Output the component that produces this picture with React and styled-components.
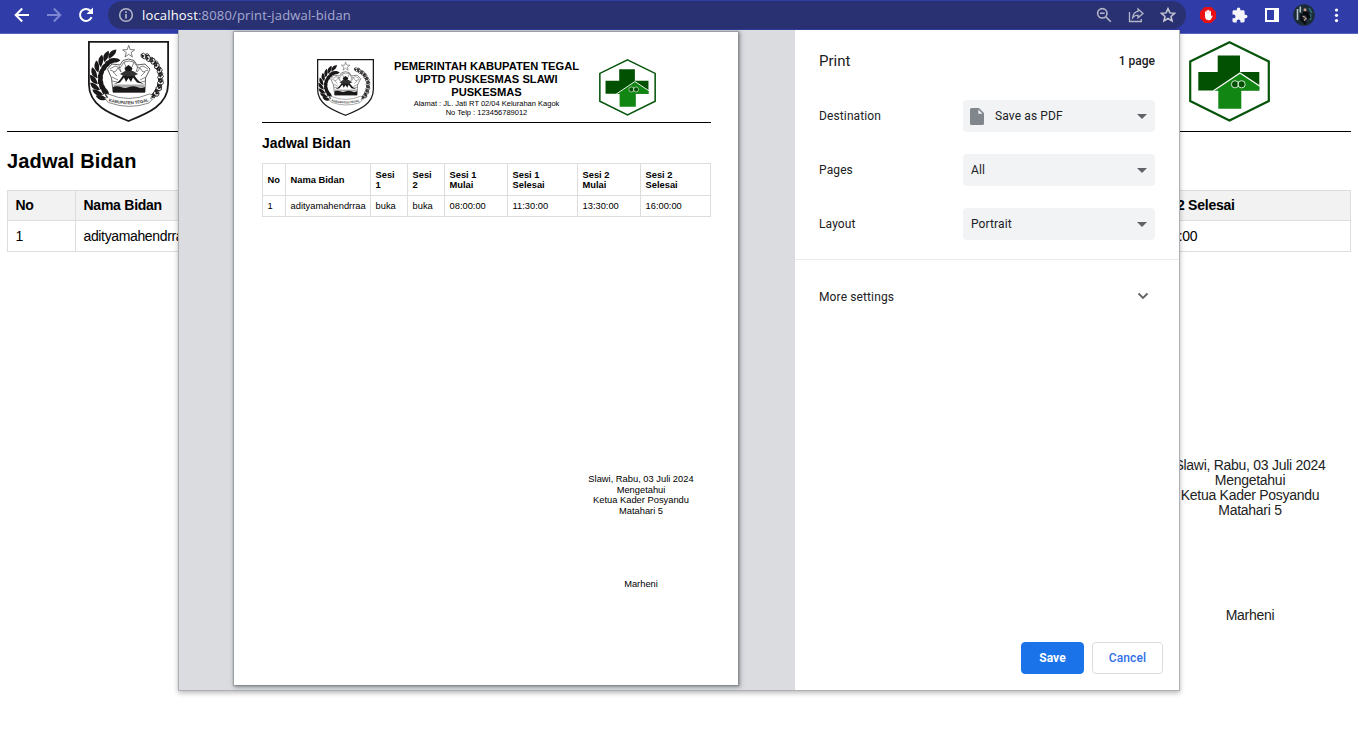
import React from "react";
import styled, { createGlobalStyle } from "styled-components";

const GlobalStyle = createGlobalStyle`
  * { box-sizing: border-box; }
  html, body { margin: 0; height: 100%; overflow: hidden; background: #fff; }
  body { font-family: "Liberation Sans", Arial, sans-serif; color: #000; }
`;

const Screen = styled.div`
  position: relative;
  width: 1358px;
  height: 731px;
  overflow: hidden;
  display: flex;
  flex-direction: column;
`;

/* ---------- browser bar ---------- */

const BrowserBar = styled.header`
  flex: none;
  display: flex;
  align-items: flex-start;
  height: 34px;
  background: #303da8;
  border-bottom: 1px solid #5a65bd;
`;

const NavGroup = styled.div`
  display: flex;
  width: 108px;
  height: 30px;
  align-items: center;
  padding-left: 12px;
  gap: 12px;
`;

const AddressBar = styled.div`
  display: flex;
  align-items: center;
  width: 1078px;
  height: 28px;
  margin-top: 1px;
  padding: 0 8px 0 8px;
  border-radius: 14px;
  background: #2a3172;
`;

const Url = styled.div`
  flex: 1;
  margin-left: 6px;
  font: 13px/20px "Open Sans", "Noto Sans", sans-serif;
  letter-spacing: 0.17px;
  color: #a5aad0;
`;

const Host = styled.span`
  color: #fff;
`;

const AddressActions = styled.div`
  display: flex;
  gap: 12px;
`;

const Extensions = styled.div`
  display: flex;
  align-items: center;
  height: 30px;
  padding-left: 12px;
  gap: 12px;
`;

const BarIcon = styled.svg`
  display: block;
  flex: none;
  width: 20px;
  height: 20px;
  overflow: visible;
  fill: none;
  stroke: ${(p) => p.$tone || "#fff"};
  stroke-width: ${(p) => p.$weight || 2};
`;

/* ---------- printed document ---------- */

const DocumentPage = styled.main`
  padding: 7px 7px 0;
`;

const Letterhead = styled.div`
  display: flex;
  justify-content: space-between;
  height: 91px;
  padding: 0 81px;
  border-bottom: 1px solid #000;
`;

const Emblem = styled.svg`
  display: block;
  width: ${(p) => p.$size}px;
  height: ${(p) => p.$size}px;
`;

const PageTitle = styled.h1`
  margin: 17px 0 0;
  font-size: 20px;
  line-height: 24px;
  letter-spacing: 0.14px;
`;

const WideTable = styled.table`
  width: 1343px;
  margin-top: 17px;
  table-layout: fixed;
  border-collapse: collapse;
  font-size: 14px;
  letter-spacing: -0.25px;
  line-height: 15px;
  th, td {
    padding: 0 7.5px;
    border: 1px solid #ddd;
    text-align: left;
    white-space: nowrap;
  }
  th { height: 30px; background: #f2f2f2; }
  td { height: 31px; letter-spacing: -0.36px; }
`;

const WideSignature = styled.div`
  display: flex;
  flex-direction: column;
  align-items: center;
  width: 154px;
  margin: 206px 24px 0 auto;
  font-size: 14px;
  letter-spacing: -0.27px;
  line-height: 15px;
  color: #222;
  white-space: nowrap;
`;

const Signer = styled.div`
  margin-top: ${(p) => p.$gap}px;
`;

/* ---------- print dialog ---------- */

const Dialog = styled.div`
  position: absolute;
  left: 178px;
  top: 30px;
  width: 1002px;
  height: 661px;
  display: flex;
  border: solid #aeb0b3;
  border-width: 0 1px 1px 1px;
  background: #fff;
  box-shadow: 0 2px 5px rgba(0, 0, 0, 0.28);
`;

const PreviewArea = styled.section`
  width: 616px;
  background: #dadce0;
  padding: 2px 0 0 55px;
`;

const Paper = styled.article`
  width: 504px;
  height: 653px;
  padding: 27px 27px 0 28px;
  background: #fff;
  box-shadow: 0 0 1px 1px rgba(110, 112, 116, 0.35), 1px 1px 4px 1px rgba(60, 64, 67, 0.55);
`;

const PaperHead = styled.div`
  display: flex;
  justify-content: space-between;
  width: 449px;
  height: 64px;
  padding: 0 55px;
  border-bottom: 1px solid #000;
`;

const Agency = styled.div`
  display: flex;
  flex-direction: column;
  align-items: center;
  padding-top: 1px;
  white-space: nowrap;
`;

const AgencyName = styled.div`
  font-size: 11.15px;
  line-height: 13px;
  font-weight: 700;
`;

const AgencyContact = styled.div`
  font-size: 7.5px;
  line-height: 9px;
`;

const PaperTitle = styled.h2`
  margin: 12px 0 0;
  font-size: 13.9px;
  line-height: 17px;
`;

const PaperTable = styled.table`
  width: 448px;
  margin-top: 11px;
  table-layout: fixed;
  border-collapse: collapse;
  font-size: 9.33px;
  line-height: 10px;
  th, td {
    padding: 0 4.5px;
    border: 1px solid #ddd;
    text-align: left;
  }
  td { white-space: nowrap; height: 21px; }
  th { height: 32px; }
`;

const HeadingLine = styled.div`
  white-space: nowrap;
`;

const PaperSignature = styled.div`
  display: flex;
  flex-direction: column;
  align-items: center;
  width: 106px;
  margin: 257px 17px 0 auto;
  font-size: 9.33px;
  line-height: 10.6px;
  white-space: nowrap;
`;

const Settings = styled.section`
  flex: 1;
  display: flex;
  flex-direction: column;
  font: 12px/20px Roboto, sans-serif;
  letter-spacing: 0.12px;
  color: #202124;
`;

const SettingsHead = styled.div`
  display: flex;
  justify-content: space-between;
  align-items: center;
  height: 59px;
  padding: 3px 24px 0;
`;

const SettingsTitle = styled.div`
  font-size: 15px;
  letter-spacing: 0;
`;

const PageCount = styled.div`
  font-weight: 500;
  letter-spacing: 0.02px;
`;

const SettingRow = styled.div`
  display: flex;
  align-items: center;
  justify-content: space-between;
  height: 54px;
  padding: 0 24px;
`;

const Select = styled.div`
  display: flex;
  align-items: center;
  width: 192px;
  height: 32px;
  padding: 0 8px;
  border-radius: 4px;
  background: #f1f3f4;
`;

const SelectValue = styled.span`
  flex: 1;
`;

const FileIcon = styled.svg`
  width: 14px;
  height: 17px;
  margin: 0 11px 0 -1px;
`;

const Caret = styled.i`
  border: solid transparent;
  border-width: 5px 5px 0;
  border-top-color: #5f6368;
`;

const MoreRow = styled(SettingRow)`
  height: 74px;
  margin-top: 8px;
  border-top: 1px solid #e8eaed;
`;

const Chevron = styled.svg`
  width: 24px;
  height: 24px;
  margin-top: -2px;
  fill: none;
  stroke: #5f6368;
  stroke-width: 1.8;
`;

const DialogActions = styled.div`
  display: flex;
  justify-content: flex-end;
  gap: 8px;
  margin-top: auto;
  padding: 0 16px 16px;
`;

const Button = styled.button`
  width: ${(p) => p.$width}px;
  height: 32px;
  padding: 0;
  border: 1px solid ${(p) => (p.$primary ? "#1a73e8" : "#dadce0")};
  border-radius: 4px;
  background: ${(p) => (p.$primary ? "#1a73e8" : "#fff")};
  color: ${(p) => (p.$primary ? "#fff" : "#2f6fe6")};
  font: ${(p) => (p.$primary ? 700 : 500)} 12px Roboto, sans-serif;
  letter-spacing: 0.1px;
`;

/* ---------- drawings ---------- */

const leftLeaves = [
  [25, 16, 70], [20, 18, 50], [15.5, 22, 35], [12, 27, 20], [9.5, 32.5, 5],
  [9, 38.5, -10], [10, 44.5, -25], [12.5, 50, -35], [16, 54.5, -45],
];
const rightFlowers = [
  [57, 15], [61.5, 18], [66, 21], [69.5, 26], [72, 31], [72.5, 37], [72, 43], [70, 48.5], [67, 53.5],
];

function RegencyCrest({ size, id }) {
  return (
    <Emblem $size={size} viewBox="0 0 81 81">
      <path
        d="M.9.9H80.1V43C80.1 65 58 73 40.5 80 23 73 .9 65 .9 43Z"
        fill="#fff" stroke="#1b1819" strokeWidth="1.8"
      />
      <path d="M40.7 4.4l1.500 4.300 4.500.1-3.600 2.800 1.300 4.300-3.700-2.500-3.700 2.500 1.300-4.300-3.600-2.800 4.500-.1Z" fill="#fff" stroke="#444" strokeWidth=".7" />
      {leftLeaves.map(([x, y, r]) => (
        <g key={y} transform={`translate(${x} ${y}) rotate(${r}) scale(1.2)`} fill="#1b1819">
          <path d="M0 4C-5.500 2.500-5.800-1.500-5-4.800-1.800-3.500-.3-.5 0 4Z" />
          <path d="M.3 4C5.500 2.500 5.800-1.500 4.800-4.800 1.900-3.500.5-.5.3 4Z" />
        </g>
      ))}
      {rightFlowers.map(([x, y], i) => (
        <g key={y} transform={`translate(${x} ${y}) rotate(${i * 18 + 10})`}>
          <path d="M-4-1Q-2-4 0-1.500 2.500-4.200 4-1 3.800 1.800 1 2 0 3.800-2 2.300-4.500 2-4-1Z" fill="#fff" stroke="#1b1819" strokeWidth=".8" />
          <path d="M0-1.500L4-1Q3.800 1.800 1 2ZM-4-1L-2 2.300-.8 0Z" fill="#1b1819" stroke="#1b1819" strokeWidth=".5" />
        </g>
      ))}
      <path d="M19.500 28L24 23l8 1 3-4.500 5.500-1.500 5.500 1.500 3 4.500 8-1 5 5-4.500 9L57 51H25l-1.500-14Z" fill="#fff" stroke="#333" strokeWidth=".8" />
      <path d="M22 28l5-3 5 2 4-6 5-1 5 1 4 6 5-2 5 3M22 29l5 2 3-4 3 4M60 29l-5 2-3-4-3 4M25 31l4 4M57 31l-4 4M24 36l6 3M58 36l-6 3M24 40l5 1M58 40l-5 1M31 25l2 6M50 25l-2 6M36 21l2 5M46 21l-2 5" fill="none" stroke="#666" strokeWidth=".8" />
      <path d="M26 43C33 40 34 35 37.500 30l-1-3 4-3 4 3-1 3C47 35 49 40 56 43l-7-1.500-4-5-2 4.500-2.500-4-2.500 4-2-4.500-4 5Z" fill="#1b1819" />
      <path d="M32 33l5-3h8l5 3-4 2h-10Z" fill="#333" />
      <path d="M25.500 43.500h31v2.500h-31Z" fill="#aaa" />
      <path d="M25 46q4-1.500 8 0t8 0 8 0 8 0V51.500H25Z" fill="#1b1819" />
      <path d="M20 53Q41 62 61.500 53l3 1-2 3.500 2 .5-3.500 4Q41 69 20.500 61.500L16.500 57l3.500-.5L17.500 53Z" fill="#fff" stroke="#555" strokeWidth=".7" />
      <path id={id} d="M20.500 60.200Q41 66.500 62 59.700" fill="none" />
      <text fontSize="4.300" fontWeight="700" fill="#333" fontFamily="Liberation Sans, sans-serif">
        <textPath href={`#${id}`} textLength="41">KABUPATEN TEGAL</textPath>
      </text>
    </Emblem>
  );
}

function HealthEmblem({ size }) {
  return (
    <Emblem $size={size} viewBox="0 0 81 81">
      <path d="M40.500 1.300L79.800 20.500V60L40.500 79.400 1.200 60V20.500Z" fill="#fff" stroke="#06550b" strokeWidth="2.200" />
      <path d="M28.700 14.500H51V31H70.300V49.500H9.300V31H28.700Z" fill="#025002" />
      <path d="M51 32L70.300 44.700V49.500H52.300V67.700H29.300V49.500H25Z" fill="#118612" />
      <path d="M24.500 49.800L51 32 71 45.200" fill="none" stroke="#fff" strokeWidth="1.300" />
      <g fill="#025002" stroke="#e4f3e4" strokeWidth=".9">
        <circle cx="46" cy="43.300" r="3.600" />
        <circle cx="52.600" cy="43.300" r="3.600" />
      </g>
      <path d="M49.300 40.600v5.400" stroke="#e4f3e4" strokeWidth=".8" />
    </Emblem>
  );
}

function Browser() {
  return (
    <BrowserBar>
      <NavGroup>
        <BarIcon viewBox="0 0 20 20"><path d="M17 10H4M10.200 3.500L3.700 10l6.500 6.500" /></BarIcon>
        <BarIcon viewBox="0 0 20 20" $tone="#7d86d2"><path d="M3 10h13M9.800 3.500l6.500 6.500-6.500 6.500" /></BarIcon>
        <BarIcon viewBox="0 0 20 20">
          <path d="M15.600 12.200A6 6 0 1 1 14.400 5.800" />
          <path d="M17 2.500V9h-6.500Z" fill="#fff" stroke="none" />
        </BarIcon>
      </NavGroup>
      <AddressBar>
        <BarIcon viewBox="0 0 20 20" $tone="#b5b7c8" $weight={1.5}>
          <circle cx="10" cy="10" r="6.300" />
          <path d="M10 9v4.500M10 6.300v1.600" strokeWidth="1.700" />
        </BarIcon>
        <Url><Host>localhost</Host>:8080/print-jadwal-bidan</Url>
        <AddressActions>
          <BarIcon viewBox="0 0 20 20" $tone="#b5b7c8" $weight={1.6}>
            <circle cx="8.300" cy="8.300" r="4.700" /><path d="M11.800 11.800l5 5M6 8.300h4.600" />
          </BarIcon>
          <BarIcon viewBox="0 0 20 20" $tone="#b5b7c8" $weight={1.3}>
            <path d="M3.500 7v9.500h11.800v-2.500" />
            <path d="M12 4l5 4.500-5 4.300v-2.600c-2.500 0-4 .7-5.300 2.400.4-3.300 2-5.800 5.300-6.200Z" />
          </BarIcon>
          <BarIcon viewBox="0 0 20 20" $tone="#c8cad6" $weight={1.5}>
            <path d="M10 3.600l1.900 4.300 4.700.4-3.600 3.100 1.100 4.600-4.100-2.500L5.900 16 7 11.400 3.400 8.300l4.700-.4Z" />
          </BarIcon>
        </AddressActions>
      </AddressBar>
      <Extensions>
        <BarIcon viewBox="0 0 20 20">
          <path d="M6.700 2h6.600L18 6.700v6.600L13.300 18H6.700L2 13.300V6.700Z" fill="#e90f13" stroke="none" />
          <path d="M7.700 10V7M9.200 9.500V5.700M10.800 9.500V5.500M12.300 10V6.700" strokeWidth="1.400" strokeLinecap="round" />
          <path d="M7 9h6v2.500l.8-.9c.6-.3 1 .1.700.8l-1.600 2.800c-1 1.300-4 1.400-5.100-.2-.6-1-.8-2.500-.8-5Z" fill="#fff" stroke="none" />
        </BarIcon>
        <BarIcon viewBox="-1.500 -2.500 28 28">
          <path d="M20.500 11H19V7c0-1.100-.9-2-2-2h-4V3.500a2.500 2.500 0 0 0-5 0V5H4c-1.100 0-2 .9-2 2v3.800h1.500a2.700 2.700 0 0 1 0 5.400H2V20c0 1.100.9 2 2 2h3.800v-1.500a2.700 2.700 0 0 1 5.400 0V22H17c1.100 0 2-.9 2-2v-4h1.500a2.500 2.500 0 0 0 0-5z" fill="#f4f4fa" stroke="none" />
        </BarIcon>
        <BarIcon viewBox="0 0 20 20">
          <path d="M4 4h12v12H4Z" /><path d="M12 4h4v12h-4Z" fill="#fff" stroke="none" />
        </BarIcon>
        <BarIcon viewBox="0 0 20 20">
          <circle cx="10" cy="10" r="10.800" fill="#1c2c36" stroke="none" />
          <path d="M3.500 4v11M6.300 1.500v6" stroke="#b6c3ca" strokeWidth="1.600" />
          <path d="M15 3l3 5M16.500 9v6" stroke="#2f6b74" strokeWidth="1.600" />
          <path d="M9 8.500l4 0 2 5" stroke="#07090d" strokeWidth="3.500" />
          <path d="M8 9l-1 5 5 5" stroke="#0b0d12" strokeWidth="2.500" />
          <circle cx="11" cy="4.800" r="1.500" fill="#c99c86" stroke="none" />
          <path d="M8.500 11l3 1.500M12.500 13l-2.500 2.500" stroke="#c4a295" strokeWidth="1.200" />
        </BarIcon>
        <BarIcon viewBox="0 0 20 20">
          <g fill="#fff" stroke="none">
            <circle cx="10.500" cy="5" r="1.600" /><circle cx="10.500" cy="10.300" r="1.600" /><circle cx="10.500" cy="15.600" r="1.600" />
          </g>
        </BarIcon>
      </Extensions>
    </BrowserBar>
  );
}

const columns = [
  [["No"], "1", 23], [["Nama Bidan"], "adityamahendrraa", 85], [["Sesi", "1"], "buka", 37],
  [["Sesi", "2"], "buka", 37], [["Sesi 1", "Mulai"], "08:00:00", 63], [["Sesi 1", "Selesai"], "11:30:00", 70],
  [["Sesi 2", "Mulai"], "13:30:00", 63], [["Sesi 2", "Selesai"], "16:00:00", 70],
];

const signatureLines = ["Slawi, Rabu, 03 Juli 2024", "Mengetahui", "Ketua Kader Posyandu", "Matahari 5"];

function Sheet() {
  return (
    <Paper>
      <PaperHead>
        <RegencyCrest size={57} id="sheet-ribbon" />
        <Agency>
          <AgencyName>PEMERINTAH KABUPATEN TEGAL</AgencyName>
          <AgencyName>UPTD PUSKESMAS SLAWI</AgencyName>
          <AgencyName>PUSKESMAS</AgencyName>
          <AgencyContact>Alamat : JL. Jati RT 02/04 Kelurahan Kagok</AgencyContact>
          <AgencyContact>No Telp : 123456789012</AgencyContact>
        </Agency>
        <HealthEmblem size={57} />
      </PaperHead>
      <PaperTitle>Jadwal Bidan</PaperTitle>
      <PaperTable>
        <colgroup>{columns.map(([h, , w]) => <col key={h.join(" ")} width={w} />)}</colgroup>
        <thead>
          <tr>
            {columns.map(([h]) => (
              <th key={h.join(" ")}>{h.map((line) => <HeadingLine key={line}>{line}</HeadingLine>)}</th>
            ))}
          </tr>
        </thead>
        <tbody><tr>{columns.map(([h, v]) => <td key={h.join(" ")}>{v}</td>)}</tr></tbody>
      </PaperTable>
      <PaperSignature>
        {signatureLines.map((l) => <div key={l}>{l}</div>)}
        <Signer $gap={62.6}>Marheni</Signer>
      </PaperSignature>
    </Paper>
  );
}

function Setting({ label, value, icon }) {
  return (
    <SettingRow>
      <span>{label}</span>
      <Select>
        {icon}
        <SelectValue>{value}</SelectValue>
        <Caret />
      </Select>
    </SettingRow>
  );
}

export default function App() {
  return (
    <Screen>
      <GlobalStyle />
      <Browser />
      <DocumentPage>
        <Letterhead>
          <RegencyCrest size={81} id="page-ribbon" />
          <HealthEmblem size={81} />
        </Letterhead>
        <PageTitle>Jadwal Bidan</PageTitle>
        <WideTable>
          <colgroup><col width={68} /><col width={1062} /><col width={213} /></colgroup>
          <thead><tr><th>No</th><th>Nama Bidan</th><th>Sesi 2 Selesai</th></tr></thead>
          <tbody><tr><td>1</td><td>adityamahendrraa</td><td>16:00:00</td></tr></tbody>
        </WideTable>
        <WideSignature>
          {signatureLines.map((l) => <div key={l}>{l}</div>)}
          <Signer $gap={90}>Marheni</Signer>
        </WideSignature>
      </DocumentPage>
      <Dialog>
        <PreviewArea><Sheet /></PreviewArea>
        <Settings>
          <SettingsHead>
            <SettingsTitle>Print</SettingsTitle>
            <PageCount>1 page</PageCount>
          </SettingsHead>
          <Setting
            label="Destination"
            value="Save as PDF"
            icon={
              <FileIcon viewBox="0 0 14 17">
                <path d="M1.500 0H9l5 5v10.500a1.500 1.500 0 0 1-1.500 1.500h-11A1.500 1.500 0 0 1 0 15.500v-14A1.500 1.500 0 0 1 1.500 0Z" fill="#80868b" />
                <path d="M8.300 1.500L12.500 5.800H8.300Z" fill="#f1f3f4" />
              </FileIcon>
            }
          />
          <Setting label="Pages" value="All" />
          <Setting label="Layout" value="Portrait" />
          <MoreRow>
            <span>More settings</span>
            <Chevron viewBox="0 0 24 24"><path d="M7.500 9.500L12 14l4.500-4.500" /></Chevron>
          </MoreRow>
          <DialogActions>
            <Button $primary $width={63}>Save</Button>
            <Button $width={71}>Cancel</Button>
          </DialogActions>
        </Settings>
      </Dialog>
    </Screen>
  );
}
